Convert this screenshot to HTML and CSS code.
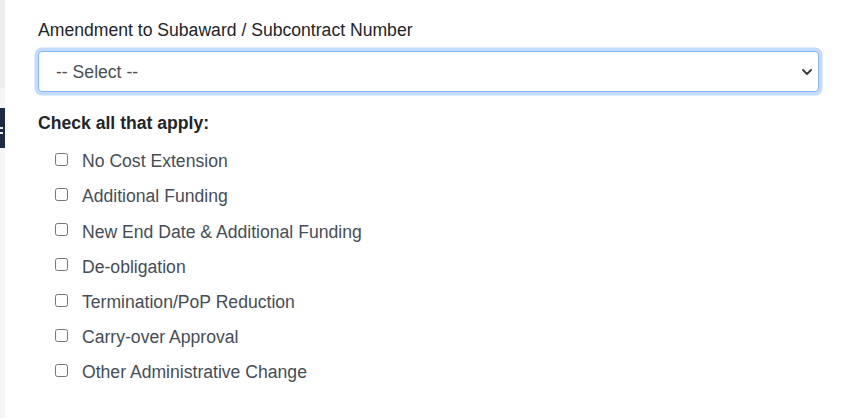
FILE: index.html
```html
<!DOCTYPE html>
<html lang="en">
<head>
<meta charset="utf-8">
<title>Amendment</title>
<link rel="stylesheet" href="styles.css">
</head>
<body>
<div class="page">
  <aside class="sidebar">
    <div class="sb-top"></div>
    <div class="sb-gap"></div>
    <div class="sb-nav"><span class="sb-glyph"></span></div>
    <div class="sb-rest"></div>
  </aside>
  <main class="content">
    <div class="form-group">
      <label class="field-label" for="amend">Amendment to Subaward / Subcontract Number</label>
      <select id="amend" class="form-select">
        <option>-- Select --</option>
      </select>
    </div>
    <p class="check-heading">Check all that apply:</p>
    <ul class="check-list">
      <li class="check-item"><input type="checkbox" id="c1"><label for="c1">No Cost Extension</label></li>
      <li class="check-item"><input type="checkbox" id="c2"><label for="c2">Additional Funding</label></li>
      <li class="check-item"><input type="checkbox" id="c3"><label for="c3">New End Date &amp; Additional Funding</label></li>
      <li class="check-item"><input type="checkbox" id="c4"><label for="c4">De-obligation</label></li>
      <li class="check-item"><input type="checkbox" id="c5"><label for="c5">Termination/PoP Reduction</label></li>
      <li class="check-item"><input type="checkbox" id="c6"><label for="c6">Carry-over Approval</label></li>
      <li class="check-item"><input type="checkbox" id="c7"><label for="c7">Other Administrative Change</label></li>
    </ul>
  </main>
</div>
</body>
</html>
```

FILE: styles.css
```css
* { box-sizing: border-box; }
html, body {
  margin: 0;
  padding: 0;
  background: #fff;
  height: 100%;
}
body {
  font-family: "Liberation Sans", Arial, sans-serif;
  font-size: 17.6px;
  line-height: 1.5;
  color: #212529;
}
.page {
  display: flex;
  min-height: 418px;
}
.sidebar {
  width: 5px;
  flex: 0 0 5px;
  display: flex;
  flex-direction: column;
}
.sb-top { height: 88px; background: #ededed; }
.sb-gap { height: 20px; background: #f6f6f6; }
.sb-nav {
  height: 40px;
  background: #1b2a47;
  display: flex;
  align-items: center;
}
.sb-glyph {
  width: 3px;
  height: 7px;
  margin-top: 4px;
  border-top: 2px solid #e8ecf2;
  border-bottom: 2px solid #e8ecf2;
}
.sb-rest { flex: 1; background: #f6f6f6; }

.content {
  flex: 1;
  padding: 17px 29px 0 33px;
}
.form-group { margin-bottom: 18px; }
.field-label {
  display: block;
  margin-bottom: 8px;
  color: #212529;
}
.form-select {
  display: block;
  width: 100%;
  height: 40.4px;
  padding: 0 30px 0 17px;
  font-family: inherit;
  font-size: 17.6px;
  color: #495057;
  background-color: #fff;
  background-image: url("data:image/svg+xml,%3csvg xmlns='http://www.w3.org/2000/svg' viewBox='0 0 10 6'%3e%3cpath fill='none' stroke='%23343a40' stroke-width='1.8' stroke-linecap='round' stroke-linejoin='round' d='M1 1l4 4 4-4'/%3e%3c/svg%3e");
  background-repeat: no-repeat;
  background-position: right 6px center;
  background-size: 10px 6px;
  border: 1px solid #86b7fe;
  border-radius: 4px;
  box-shadow: 0 0 0 3.5px rgba(13, 110, 253, 0.25);
  appearance: none;
  -webkit-appearance: none;
  outline: none;
}
.check-heading {
  margin: 0 0 12px;
  font-weight: bold;
  color: #212529;
}
.check-list {
  list-style: none;
  margin: 0;
  padding: 0 0 0 17px;
}
.check-item {
  display: flex;
  align-items: flex-start;
  margin-bottom: 8.8px;
  color: #454d56;
}
.check-item input {
  appearance: none;
  -webkit-appearance: none;
  width: 13px;
  height: 13px;
  margin: 4.7px 14px 0 0;
  flex: 0 0 13px;
  border: 1px solid #767676;
  border-radius: 2.5px;
  background: #fff;
}
```
